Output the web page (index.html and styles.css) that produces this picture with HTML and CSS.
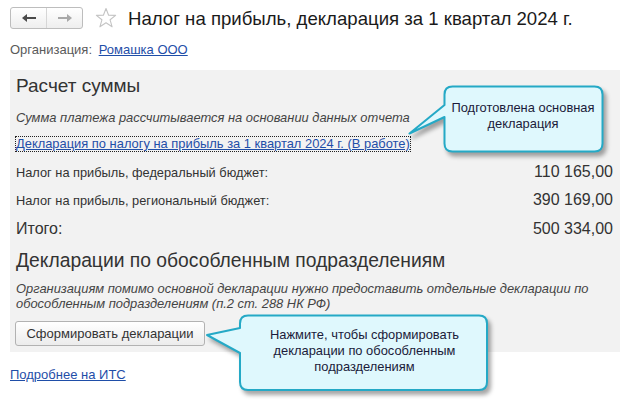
FILE: index.html
```html
<html>
  <head>
    <meta charset="utf-8" />
    <title>Налог на прибыль</title>
    <link rel="stylesheet" href="styles.css">
  </head>
  <body>
    <div class="page">
      <div class="header">
        <div class="nav">
          <div class="nav-btn">
            <svg width="16" height="10" viewBox="0 0 16 10"><path d="M1 5 L6 1 L6 4 L15 4 L15 6 L6 6 L6 9 Z" fill="#4a4a4a"/></svg>
          </div>
          <div class="nav-btn">
            <svg width="16" height="10" viewBox="0 0 16 10"><path d="M15 5 L10 1 L10 4 L1 4 L1 6 L10 6 L10 9 Z" fill="#a8a8a8"/></svg>
          </div>
        </div>
        <svg class="star" width="22" height="22" viewBox="0 0 22 22"><path d="M11 1.5 L13.6 8.2 L20.6 8.4 L15.1 12.8 L17.1 19.8 L11 15.7 L4.9 19.8 L6.9 12.8 L1.4 8.4 L8.4 8.2 Z" fill="none" stroke="#c4c4c4" stroke-width="1.1" stroke-linejoin="round"/></svg>
        <div class="title">Налог на прибыль, декларация за 1 квартал 2024 г.</div>
      </div>

      <div class="org">
        <span class="org-label">Организация:</span>
        <a class="link" href="#">Ромашка ООО</a>
      </div>

      <div class="panel">
        <div class="heading">Расчет суммы</div>
        <div class="note first-note">Сумма платежа рассчитывается на основании данных отчета</div>
        <div class="decl-row">
          <a class="link focused" href="#">Декларация по налогу на прибыль за 1 квартал 2024 г. (В работе)</a>
        </div>
        <div class="sum-row first-row">
          <span class="sum-label">Налог на прибыль, федеральный бюджет:</span>
          <span class="sum-value">110 165,00</span>
        </div>
        <div class="sum-row">
          <span class="sum-label">Налог на прибыль, региональный бюджет:</span>
          <span class="sum-value">390 169,00</span>
        </div>
        <div class="sum-row total">
          <span class="sum-label">Итого:</span>
          <span class="sum-value">500 334,00</span>
        </div>
        <div class="heading second">Декларации по обособленным подразделениям</div>
        <div class="note second-note">Организациям помимо основной декларации нужно предоставить отдельные декларации по обособленным подразделениям (п.2 ст. 288 НК РФ)</div>
        <div class="button">Сформировать декларации</div>
      </div>

      <div class="more">
        <a class="link" href="#">Подробнее на ИТС</a>
      </div>
    </div>

    <div class="callout callout-top">
      <svg class="bubble" width="200" height="74" viewBox="0 0 200 74">
        <path d="M44.5 10.5 Q44.5 2.5 52.5 2.5 L194.5 2.5 Q202.5 2.5 202.5 10.5 L202.5 59.5 Q202.5 67.5 194.5 67.5 L52.5 67.5 Q44.5 67.5 44.5 59.5 L44.5 33 L9.5 49.5 L44.5 21 Z" transform="translate(-1,0)" fill="#dff8fd" stroke="#25a9c6" stroke-width="2" stroke-linejoin="round"/>
      </svg>
      <div class="callout-text">Подготовлена основная<br>декларация</div>
    </div>

    <div class="callout callout-bottom">
      <svg class="bubble" width="290" height="84" viewBox="0 0 290 84">
        <path d="M41 10.5 Q41 2.5 49 2.5 L280 2.5 Q288 2.5 288 10.5 L288 69 Q288 77 280 77 L49 77 Q41 77 41 69 L41 40 L8 22 L41 15 Z" fill="#dff8fd" stroke="#25a9c6" stroke-width="2" stroke-linejoin="round"/>
      </svg>
      <div class="callout-text">Нажмите, чтобы сформировать<br>декларации по обособленным<br>подразделениям</div>
    </div>
  </body>
</html>
```

FILE: styles.css
```css
body {
    margin: 0;
    font-family: "Liberation Sans", Arial, sans-serif;
    color: #333333;
    background: #ffffff;
}
.page {
    padding: 7px 8px 0 10px;
}
.header {
    display: flex;
    align-items: center;
    height: 22px;
}
.nav {
    display: flex;
    width: 71px;
    height: 20px;
    border: 1px solid #bdbdbd;
    border-radius: 3px;
    background: linear-gradient(#ffffff, #eeeeee);
}
.nav-btn {
    flex: 1;
    display: flex;
    justify-content: center;
    align-items: center;
}
.nav-btn + .nav-btn {
    border-left: 1px solid #d6d6d6;
}
.star {
    margin-left: 12px;
}
.title {
    margin-left: 11px;
    font-size: 18.6px;
    color: #1a1a1a;
    line-height: 24px;
    position: relative;
    top: 1px;
}
.org {
    margin-top: 14px;
    font-size: 13px;
    line-height: 14px;
}
.org-label {
    color: #5a5a5a;
    margin-right: 3px;
}
.link {
    color: #1f4ea8;
    text-decoration: underline;
}
.panel {
    margin-top: 13px;
    width: 604px;
    background: #f2f2f2;
    padding: 4px 0 6px 6px;
}
.heading {
    font-size: 19px;
    line-height: 24px;
    color: #333333;
}
.heading.second {
    margin-top: 5px;
    font-size: 19.3px;
}
.note {
    font-size: 12.9px;
    font-style: italic;
    color: #444444;
}
.first-note {
    margin-top: 12px;
    line-height: 16px;
}
.second-note {
    margin-top: 8px;
    line-height: 15px;
}
.decl-row {
    margin-top: 10px;
    height: 16px;
    font-size: 12.9px;
}
.focused {
    display: inline-block;
    margin-left: -1px;
    line-height: 14px;
    border: 1px dotted #222222;
}
.sum-row {
    display: flex;
    justify-content: space-between;
    align-items: center;
    height: 28px;
    padding-right: 7px;
}
.first-row {
    margin-top: 6px;
}
.sum-row.total {
    height: 30px;
}
.sum-label {
    font-size: 12.8px;
    color: #333333;
}
.total .sum-label {
    font-size: 16px;
}
.sum-value {
    font-size: 16px;
    color: #333333;
}
.button {
    margin-top: 10px;
    margin-left: -1px;
    width: 188px;
    height: 23px;
    border: 1px solid #b2b2b2;
    border-radius: 3px;
    background: linear-gradient(#ffffff, #ececec);
    font-size: 13px;
    color: #333333;
    display: flex;
    justify-content: center;
    align-items: center;
}
.more {
    margin-top: 16px;
    font-size: 13px;
    line-height: 14px;
}
.callout {
    position: absolute;
}
.bubble {
    display: block;
    overflow: visible;
    filter: drop-shadow(3px 4px 2px rgba(0, 0, 0, 0.35));
}
.callout-text {
    position: absolute;
    font-size: 12.9px;
    line-height: 16px;
    color: #1b1b3a;
    text-align: center;
}
.callout-top {
    left: 401px;
    top: 84px;
}
.callout-top .callout-text {
    left: 44px;
    right: 0;
    top: 16px;
}
.callout-bottom {
    left: 199px;
    top: 313px;
}
.callout-bottom .callout-text {
    left: 41px;
    right: 0;
    top: 14px;
}
```
